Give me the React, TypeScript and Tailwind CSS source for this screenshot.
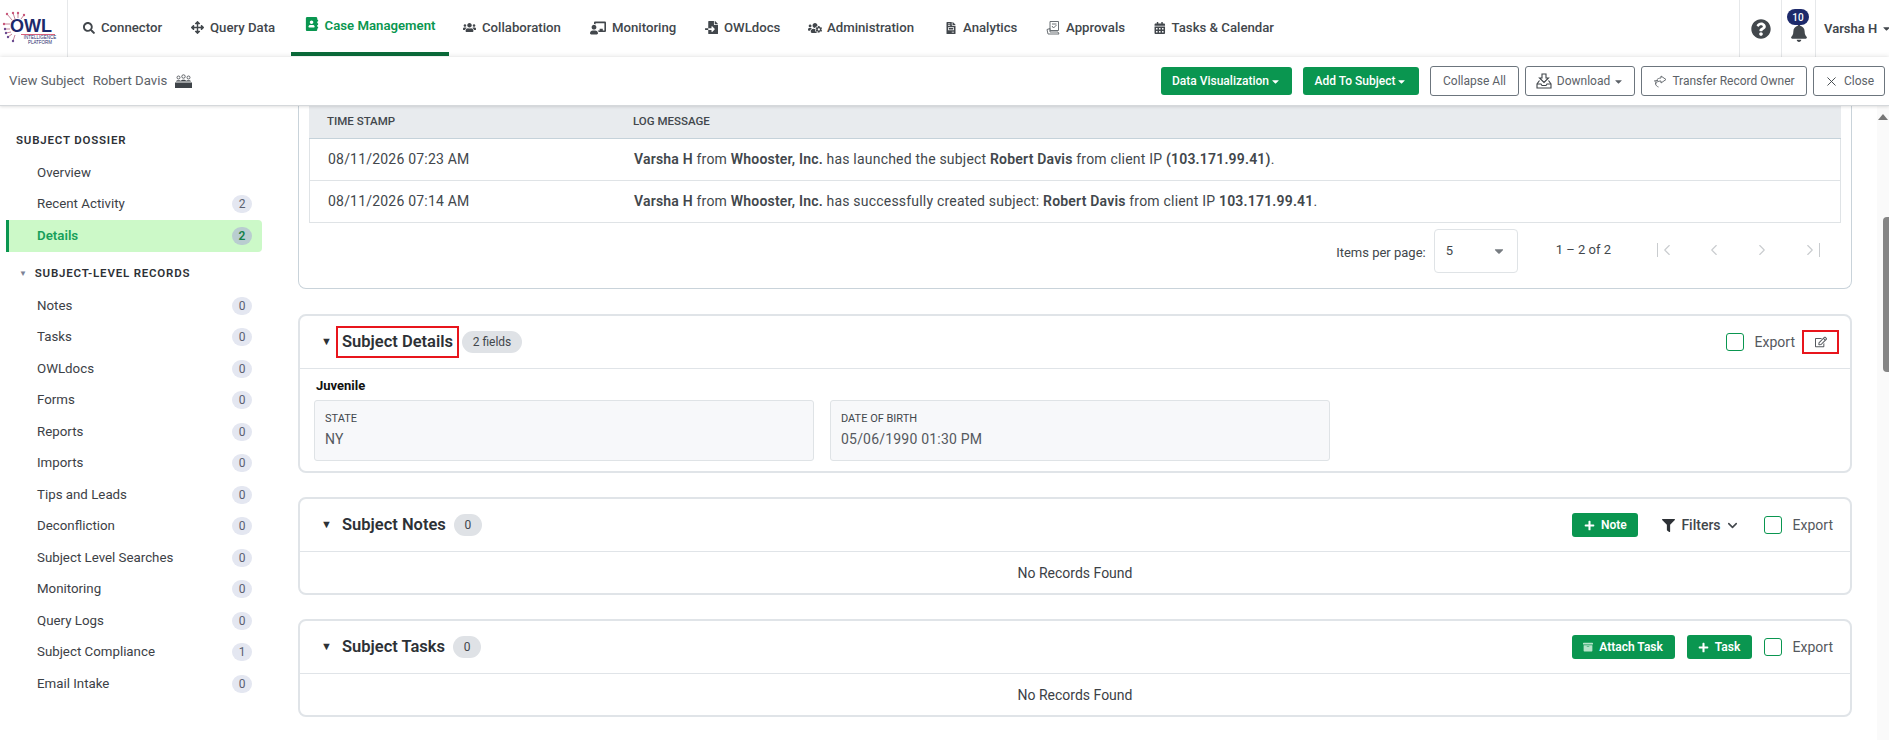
import { ChevronLeft, ChevronRight, ChevronDown, X } from "lucide-react";
import type { ReactNode } from "react";
import {
  FaAddressBook,
  FaArchive,
  FaArrowsAlt,
  FaBell,
  FaCalendarAlt,
  FaCaretDown,
  FaChalkboardTeacher,
  FaFileImport,
  FaFileInvoice,
  FaFilter,
  FaPlus,
  FaQuestionCircle,
  FaRegEdit,
  FaSearch,
  FaUsers,
  FaUsersCog,
} from "react-icons/fa";

function ApprovalsIcon() {
  return (
    <svg width="15" height="15" viewBox="0 0 15 15" fill="none" stroke="#6b7075" strokeWidth="1">
      <path d="M4 1.5h8.5v9H4z" />
      <path d="M6 4h4.5M6 6l1.5 2L10.500 5" />
      <path d="M1 9.500l3-1v3.500h8l1 2H2z" />
    </svg>
  );
}

function TransferIcon() {
  return (
    <svg width="14" height="14" viewBox="0 0 14 14" fill="none" stroke="#6b7075" strokeWidth="1">
      <path d="M8 2l5 3.500L8 9V7C5 7 3.500 8 2.500 10 2.500 6.500 4.500 4 8 4z" />
      <path d="M2.500 10c.5 1.500 1.500 2.500 3 3 M5 6.500L1 7" />
    </svg>
  );
}

function DownloadIcon() {
  return (
    <svg width="16" height="16" viewBox="0 0 16 16" fill="none" stroke="#3f4449" strokeWidth="1.100">
      <path d="M6 1h4v4h2.500L8 9.500 3.500 5H6z" />
      <path d="M3.500 7.500L1 11v4h14v-4l-2.500-3.500" />
      <path d="M1 11h4l1 1.500h4L11 11h4" />
    </svg>
  );
}

function SubjectGroupIcon() {
  return (
    <svg width="17" height="14" viewBox="0 0 17 14" fill="#3f4449">
      <circle cx="3.500" cy="3.500" r="1.500" fill="none" stroke="#3f4449" strokeWidth="0.800" />
      <circle cx="8.500" cy="2.500" r="1.700" fill="none" stroke="#3f4449" strokeWidth="0.800" />
      <circle cx="13.500" cy="3.500" r="1.500" fill="none" stroke="#3f4449" strokeWidth="0.800" />
      <path d="M1 7.500c0-1.800 5-1.800 5 0zM5.500 7.500c0-2.300 6-2.300 6 0zM11 7.500c0-1.800 5-1.800 5 0z" />
      <rect x="0" y="8.500" width="17" height="5.500" />
    </svg>
  );
}

function Logo() {
  return (
    <div className="relative w-[68px] h-[57px] border-r border-[#e6e8ea] shrink-0">
      <svg width="67" height="57" viewBox="0 0 67 57" fill="none" className="absolute left-0 top-0">
        <g stroke="#b0506e" strokeWidth="0.700" fill="none">
          <path d="M7 14l5 6M13 13l2 6M18 13v5M24 15l-3 4M4 24h6M5 29h5M6 33l5-1M8 37l4-3M13 41l2-6" />
        </g>
        <g fill="#c8587a">
          <circle cx="7" cy="14" r="1.200" />
          <circle cx="13" cy="13" r="1.200" />
          <circle cx="18" cy="13" r="1.200" />
          <circle cx="24" cy="15" r="1.200" />
          <circle cx="4" cy="24" r="1.200" />
        </g>
        <g fill="#6a4a90">
          <circle cx="5" cy="29" r="1.200" />
          <circle cx="6" cy="33" r="1.200" />
          <circle cx="8" cy="37" r="1.200" />
          <circle cx="13" cy="41" r="1.200" />
        </g>
        <path d="M21 34.500h34" stroke="#d8607a" strokeWidth="1.200" />
      </svg>
      <span className="absolute left-[10px] top-[13px] text-[18px] leading-[26px] font-bold text-[#1d2a6b] font-['Liberation_Sans',sans-serif]">
        OWL
      </span>
      <span className="absolute left-[22px] top-[36px] w-[36px] text-center text-[4.500px] leading-[4.500px] text-[#1d2a6b] font-['Liberation_Sans',sans-serif]">
        INTELLIGENCE PLATFORM
      </span>
    </div>
  );
}

function NavItem({ icon, label, width, gap }: { icon: ReactNode; label: string; width: string; gap: string }) {
  return (
    <div className={`flex items-center h-[57px] shrink-0 pb-[2px] ${width} ${gap}`}>
      {icon}
      <span className="font-medium text-[13.200px] text-[#42474c] whitespace-nowrap">{label}</span>
    </div>
  );
}

function TopNav() {
  return (
    <header className="flex items-center h-[57px] bg-white">
      <Logo />
      <nav className="flex pl-[15px] flex-1">
        <NavItem icon={<FaSearch size={12} className="text-[#42474c]" />} label="Connector" width="w-[108px]" gap="gap-[6px]" />
        <NavItem icon={<FaArrowsAlt size={13} className="text-[#42474c]" />} label="Query Data" width="w-[100px]" gap="gap-[6px]" />
        <div className="flex items-start justify-center gap-[6px] w-[158px] h-[56px] pt-[16px] border-b-[4px] border-[#0b6b3a] shrink-0">
          <FaAddressBook size={14} className="text-[#0a9650] mt-[1px]" />
          <span className="font-semibold text-[13.200px] text-[#0a9650] whitespace-nowrap">Case Management</span>
        </div>
        <div className="w-[14px] shrink-0" />
        <NavItem icon={<FaUsers size={13} className="text-[#42474c]" />} label="Collaboration" width="w-[127px]" gap="gap-[6px]" />
        <NavItem icon={<FaChalkboardTeacher size={16} className="text-[#42474c]" />} label="Monitoring" width="w-[115px]" gap="gap-[6px]" />
        <NavItem icon={<FaFileImport size={13} className="text-[#42474c]" />} label="OWLdocs" width="w-[103px]" gap="gap-[6px]" />
        <NavItem icon={<FaUsersCog size={14} className="text-[#42474c]" />} label="Administration" width="w-[137px]" gap="gap-[5px]" />
        <NavItem icon={<FaFileInvoice size={12} className="text-[#42474c]" />} label="Analytics" width="w-[101px]" gap="gap-[6px]" />
        <NavItem icon={<ApprovalsIcon />} label="Approvals" width="w-[108px]" gap="gap-[5px]" />
        <NavItem icon={<FaCalendarAlt size={12} className="text-[#42474c]" />} label="Tasks & Calendar" width="w-[120px]" gap="gap-[6px]" />
      </nav>
      <div className="flex items-center justify-center w-[42px] h-[57px] border-l border-[#e6e8ea]">
        <FaQuestionCircle size={20} className="text-[#42474c]" />
      </div>
      <div className="relative flex items-center justify-center w-[34px] h-[57px] border-l border-[#e6e8ea] pt-[8px]">
        <FaBell size={18} className="text-[#42474c]" />
        <span className="absolute left-[5px] top-[9px] flex items-center justify-center w-[22px] h-[16px] rounded-full bg-[#1d2a6b] text-white text-[10px] font-medium">
          10
        </span>
      </div>
      <div className="flex items-center gap-[4px] w-[74px] h-[57px] border-l border-[#e6e8ea] pl-[8px] overflow-hidden">
        <span className="font-semibold text-[13px] text-[#42474c] whitespace-nowrap">Varsha H</span>
        <FaCaretDown size={11} className="text-[#42474c] shrink-0" />
      </div>
    </header>
  );
}

function GreenButton({ children }: { children: ReactNode }) {
  return (
    <button className="flex items-center justify-center gap-[1px] w-full h-[28px] rounded-[3px] bg-[#0a9650] text-white text-[12px] font-medium">
      {children}
    </button>
  );
}

function OutlineButton({ width, children }: { width: string; children: ReactNode }) {
  return (
    <button className={`flex items-center justify-center gap-[5px] h-[30px] rounded-[3px] border border-[#6c757d] text-[#5c6268] text-[12px] ${width}`}>
      {children}
    </button>
  );
}

function SubHeader() {
  return (
    <div className="relative z-10 flex items-center h-[49px] bg-white border-b border-[#d5d8db] shadow-[0_-2px_4px_rgba(0,0,0,0.06),0_1px_3px_rgba(0,0,0,0.12)] pl-[9px] pr-[4px]">
      <span className="text-[13.200px] text-[#5c6268]">View Subject</span>
      <span className="text-[13.200px] text-[#5c6268] ml-[8px]">Robert Davis</span>
      <span className="ml-[8px]">
        <SubjectGroupIcon />
      </span>
      <div className="flex items-center ml-auto">
        <div className="w-[131px]">
          <GreenButton>
            Data Visualization <FaCaretDown size={11} />
          </GreenButton>
        </div>
        <div className="w-[116px] ml-[11px]">
          <GreenButton>
            Add To Subject <FaCaretDown size={11} />
          </GreenButton>
        </div>
        <div className="ml-[11px]">
          <OutlineButton width="w-[89px]">Collapse All</OutlineButton>
        </div>
        <div className="ml-[6px]">
          <OutlineButton width="w-[110px]">
            <DownloadIcon /> Download <FaCaretDown size={11} className="-ml-[2px]" />
          </OutlineButton>
        </div>
        <div className="ml-[6px]">
          <OutlineButton width="w-[166px]">
            <TransferIcon /> Transfer Record Owner
          </OutlineButton>
        </div>
        <div className="ml-[6px]">
          <OutlineButton width="w-[72px]">
            <X size={15} strokeWidth={1.500} className="text-[#3f4449]" /> Close
          </OutlineButton>
        </div>
      </div>
    </div>
  );
}

const topItems = [
  { label: "Overview" },
  { label: "Recent Activity", count: 2 },
];

const recordItems = [
  { label: "Notes", count: 0 },
  { label: "Tasks", count: 0 },
  { label: "OWLdocs", count: 0 },
  { label: "Forms", count: 0 },
  { label: "Reports", count: 0 },
  { label: "Imports", count: 0 },
  { label: "Tips and Leads", count: 0 },
  { label: "Deconfliction", count: 0 },
  { label: "Subject Level Searches", count: 0 },
  { label: "Monitoring", count: 0 },
  { label: "Query Logs", count: 0 },
  { label: "Subject Compliance", count: 1 },
  { label: "Email Intake", count: 0 },
];

function SideRow({ label, count }: { label: string; count?: number }) {
  return (
    <div className="flex items-center justify-between h-[31.500px] pl-[37px] pr-[46px] text-[13.300px] text-[#3c4146]">
      <span>{label}</span>
      {count !== undefined && (
        <span className="flex items-center justify-center w-[20px] h-[18px] rounded-full bg-[#e4e7f1] text-[12px] text-[#5a6070]">
          {count}
        </span>
      )}
    </div>
  );
}

function Sidebar() {
  return (
    <aside className="w-[298px] shrink-0 pt-[24px] overflow-hidden">
      <div className="pl-[16px] h-[22px] flex items-center text-[11.500px] font-semibold tracking-[0.8px] text-[#2d3136]">
        SUBJECT DOSSIER
      </div>
      <div className="mt-[5px]">
        {topItems.map((item) => (
          <SideRow key={item.label} label={item.label} count={item.count} />
        ))}
      </div>
      <div className="flex items-center justify-between h-[32px] ml-[6px] w-[256px] pl-[28px] pr-[10px] rounded-r-[4px] border-l-[3px] border-[#0a9650] bg-[#ccf9c8] text-[13.300px] font-semibold text-[#16a05a]">
        <span>Details</span>
        <span className="flex items-center justify-center w-[20px] h-[18px] rounded-full bg-[#b9cdd0] text-[12px] text-[#16804a]">2</span>
      </div>
      <div className="flex items-center h-[38px] pt-[5px] pl-[19px] gap-[7px] text-[11.500px] font-semibold tracking-[0.8px] text-[#2d3136]">
        <span className="text-[8px] text-[#7d8296]">▼</span>
        SUBJECT-LEVEL RECORDS
      </div>
      {recordItems.map((item) => (
        <SideRow key={item.label} label={item.label} count={item.count} />
      ))}
    </aside>
  );
}

function LogRow({ time, children }: { time: string; children: ReactNode }) {
  return (
    <div className="flex items-center h-[42px] border-b border-x border-[#dfe3e6] text-[14px] tracking-[0.2px] text-[#42474c]">
      <span className="w-[324px] pl-[18px] shrink-0">{time}</span>
      <span>{children}</span>
    </div>
  );
}

function ActivityCard() {
  return (
    <section className="h-[183px] rounded-b-[8px] border-x border-b border-[#c9d3da] px-[10px]">
      <div className="flex items-center h-[33px] bg-[#e8ebee] border-b border-[#c5d2da] text-[11.500px] font-medium text-[#42474c]">
        <span className="w-[324px] pl-[18px] shrink-0">TIME STAMP</span>
        <span>LOG MESSAGE</span>
      </div>
      <LogRow time="08/11/2026 07:23 AM">
        <b className="font-semibold">Varsha H</b> from <b className="font-semibold">Whooster, Inc.</b> has launched the subject{" "}
        <b className="font-semibold">Robert Davis</b> from client IP <b className="font-semibold">(103.171.99.41)</b>.
      </LogRow>
      <LogRow time="08/11/2026 07:14 AM">
        <b className="font-semibold">Varsha H</b> from <b className="font-semibold">Whooster, Inc.</b> has successfully created subject:{" "}
        <b className="font-semibold">Robert Davis</b> from client IP <b className="font-semibold">103.171.99.41</b>.
      </LogRow>
      <div className="flex items-center justify-end h-[50px] pt-[6px] text-[13px] text-[#42474c]">
        <span className="mt-[3px]">Items per page:</span>
        <div className="flex items-center justify-between w-[84px] h-[44px] ml-[8px] px-[11px] rounded-[4px] border border-[#dfe3e6]">
          <span>5</span>
          <FaCaretDown size={14} className="text-[#777c81]" />
        </div>
        <span className="ml-[38px] mb-[2px]">1 – 2 of 2</span>
        <div className="flex items-center text-[#c9cccf] ml-[31px] mr-[7px] mb-[2px]">
          <span className="flex items-center justify-center w-[48px]">
            <span className="w-px h-[14px] bg-[#c9cccf]" />
            <ChevronLeft size={18} strokeWidth={1.500} />
          </span>
          <span className="flex items-center justify-center w-[48px]">
            <ChevronLeft size={18} strokeWidth={1.500} />
          </span>
          <span className="flex items-center justify-center w-[48px]">
            <ChevronRight size={18} strokeWidth={1.500} />
          </span>
          <span className="flex items-center justify-center w-[48px]">
            <ChevronRight size={18} strokeWidth={1.500} />
            <span className="w-px h-[14px] bg-[#c9cccf]" />
          </span>
        </div>
      </div>
    </section>
  );
}

function ExportCheck() {
  return (
    <div className="flex items-center gap-[11px]">
      <span className="w-[18px] h-[18px] rounded-[3px] border border-[#0a9650] bg-white" />
      <span className="text-[14px] text-[#55595e]">Export</span>
    </div>
  );
}

function Card({ className, children }: { className: string; children: ReactNode }) {
  return <section className={`rounded-[8px] border-2 border-[#e0e4e8] bg-white ${className}`}>{children}</section>;
}

function SectionTitle({ title, chip, chipWidth }: { title: string; chip: string; chipWidth: string }) {
  return (
    <div className="flex items-center">
      <span className="w-[24px] pl-[3px] text-[11px] text-[#2d3136]">▼</span>
      <h2 className="text-[16.500px] font-semibold text-[#2d3136]">{title}</h2>
      <span className={`flex items-center justify-center h-[22px] ml-[8px] rounded-full bg-[#dfe2e6] text-[12px] text-[#42474c] ${chipWidth}`}>
        {chip}
      </span>
    </div>
  );
}

function DetailField({ label, value }: { label: string; value: string }) {
  return (
    <div className="w-[500px] h-[61px] rounded-[3px] border border-[#dfe3e6] bg-[#f7f8fa] pl-[10px] pt-[9px]">
      <div className="text-[11px] leading-[17px] text-[#42474c]">{label}</div>
      <div className="text-[14px] tracking-[0.2px] leading-[20px] mt-[2px] text-[#55595e]">{value}</div>
    </div>
  );
}

function SubjectDetailsCard() {
  return (
    <Card className="h-[159px] mt-[25px]">
      <div className="flex items-center justify-between h-[53px] border-b border-[#e0e4e8] pl-[18px] pr-[11px]">
        <div className="flex items-center">
          <span className="text-[11px] text-[#2d3136] w-[18px] pl-[3px]">▼</span>
          <h2 className="flex items-center h-[32px] w-[123px] pl-[4px] text-[16.500px] font-semibold text-[#2d3136] border-2 border-[#e8151c] whitespace-nowrap">
            Subject Details
          </h2>
          <span className="flex items-center justify-center w-[60px] h-[22px] ml-[3px] rounded-full bg-[#dfe2e6] text-[12px] text-[#42474c]">
            2 fields
          </span>
        </div>
        <div className="flex items-center">
          <ExportCheck />
          <span className="flex items-center justify-center w-[37px] h-[24px] ml-[7px] border-2 border-[#e8151c]">
            <FaRegEdit size={12} className="text-[#55595e]" />
          </span>
        </div>
      </div>
      <div className="pl-[16px] pt-[7px] text-[13px] font-bold leading-[20px] text-[#111]">Juvenile</div>
      <div className="flex gap-[16px] pl-[14px] mt-[4px]">
        <DetailField label="STATE" value="NY" />
        <DetailField label="DATE OF BIRTH" value="05/06/1990 01:30 PM" />
      </div>
    </Card>
  );
}

function EmptyCard({ title, actions }: { title: string; actions: ReactNode }) {
  return (
    <Card className="h-[98px] mt-[24px]">
      <div className="flex items-center justify-between h-[53px] border-b border-[#e0e4e8] pl-[18px] pr-[17px]">
        <SectionTitle title={title} chip="0" chipWidth="w-[28px]" />
        <div className="flex items-center">{actions}</div>
      </div>
      <div className="flex items-center justify-center h-[42px] text-[14px] text-[#3c4146]">No Records Found</div>
    </Card>
  );
}

function SmallButton({ width, children }: { width: string; children: ReactNode }) {
  return (
    <button className={`flex items-center justify-center gap-[6px] h-[24px] rounded-[3px] bg-[#0a9650] text-white text-[12px] font-semibold ${width}`}>
      {children}
    </button>
  );
}

function Content() {
  return (
    <main className="flex-1 overflow-hidden">
      <ActivityCard />
      <SubjectDetailsCard />
      <EmptyCard
        title="Subject Notes"
        actions={
          <>
            <SmallButton width="w-[66px]">
              <FaPlus size={11} /> Note
            </SmallButton>
            <span className="flex items-center ml-[24px] gap-[6px] text-[14px] font-medium text-[#42474c]">
              <FaFilter size={13} className="text-[#2d3136]" /> Filters
              <ChevronDown size={15} strokeWidth={2.500} className="-ml-[2px]" />
            </span>
            <span className="ml-[24px]">
              <ExportCheck />
            </span>
          </>
        }
      />
      <EmptyCard
        title="Subject Tasks"
        actions={
          <>
            <SmallButton width="w-[103px]">
              <FaArchive size={10} className="text-[#b5e3c9]" /> Attach Task
            </SmallButton>
            <span className="ml-[12px]">
              <SmallButton width="w-[65px]">
                <FaPlus size={11} /> Task
              </SmallButton>
            </span>
            <span className="ml-[12px]">
              <ExportCheck />
            </span>
          </>
        }
      />
    </main>
  );
}

function ScrollTrack() {
  return (
    <div className="flex flex-col items-end w-[37px] ml-[0px] shrink-0">
      <div className="flex flex-1 flex-col items-end w-[12px] h-full bg-[#fafafa]">
        <span className="mt-[8px] mr-[1px] w-0 h-0 border-x-[5px] border-x-transparent border-b-[6px] border-b-[#777]" />
        <span className="mt-[97px] w-[6px] h-[155px] rounded-l-[4px] bg-[#858585]" />
      </div>
    </div>
  );
}

export default function App() {
  return (
    <div className="h-[740px] w-[1889px] overflow-hidden bg-white font-['Roboto',sans-serif]">
      <TopNav />
      <SubHeader />
      <div className="flex h-[634px]">
        <Sidebar />
        <Content />
        <ScrollTrack />
      </div>
    </div>
  );
}
